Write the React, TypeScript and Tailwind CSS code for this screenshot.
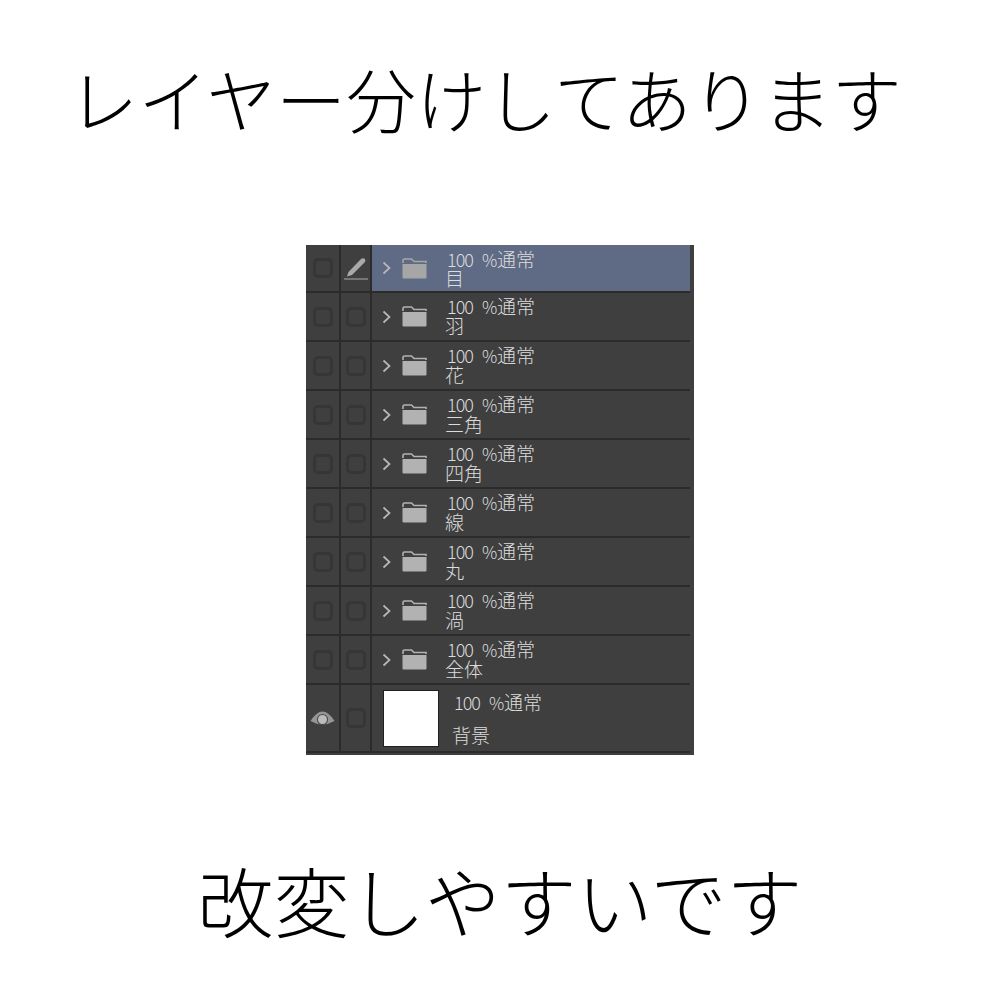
const rows = ['目', '羽', '花', '三角', '四角', '線', '丸', '渦', '全体'];

const cjk = { fontFamily: '"Noto Sans CJK JP", sans-serif' };

function Check() {
  return <div className="w-[20px] h-[20px] rounded-[5px] border-[3px] border-[#363636]" />;
}

function Pen() {
  return (
    <svg width="26" height="24" viewBox="0 0 26 24" fill="none">
      <path d="M4 20.5 L5.5 16 L18 3 Q20 1.5 22 3 Q23 5 21.5 6.5 L9 19 Z" fill="#a9a9a9" />
      <path d="M1 23 H25" stroke="#8f8f8f" strokeWidth="1.4" />
    </svg>
  );
}

function Eye() {
  return (
    <svg width="25" height="15" viewBox="0 0 25 15" fill="none">
      <path d="M0.5 10 Q12.5 -9 24.5 10 Q12.5 17 0.5 10 Z" fill="#969696" />
      <circle cx="12.5" cy="8.5" r="5.6" fill="#4a4a4a" />
      <circle cx="12.5" cy="8.5" r="4.5" fill="#bcbcbc" />
    </svg>
  );
}

function Folder({ active }: { active: boolean }) {
  const color = active ? '#a6a6a6' : '#b2b2b2';
  return (
    <svg width="25" height="21" viewBox="0 0 25 21" fill="none">
      <path d="M1 5 V2.5 Q1 1 2.5 1 H9.5 L12 3.5 H24 V5" stroke={color} strokeWidth="1.6" />
      <path d="M0.5 6 H24.5 V19.5 Q24.5 20.5 23.5 20.5 H1.5 Q0.5 20.5 0.5 19.5 Z" fill={color} />
    </svg>
  );
}

function Chevron() {
  return (
    <svg width="9" height="14" viewBox="0 0 9 14" fill="none">
      <path d="M1.5 1.5 L7.5 7 L1.5 12.5" stroke="#b8b8b8" strokeWidth="1.7" />
    </svg>
  );
}

function Opacity() {
  return (
    <div className="flex items-baseline whitespace-nowrap pl-[2px] h-[19px] leading-[19px]">
      <span className="text-[18px] tracking-[-1px] w-[35px] font-light">100</span>
      <span className="text-[17px] w-[15px] font-light">%</span>
      <span className="text-[19px] font-light">通常</span>
    </div>
  );
}

function FolderRow({ name, index }: { name: string; index: number }) {
  const active = index === 0;
  return (
    <div className={`flex ${active ? 'h-[48px]' : 'h-[49px]'} border-b-2 border-[#2b2b2b]`}>
      <div className="w-[35px] flex items-center justify-center border-r-2 border-[#2b2b2b]">
        <Check />
      </div>
      <div className="w-[31px] flex items-center justify-center border-r-2 border-[#2b2b2b]">
        {active ? <Pen /> : <Check />}
      </div>
      <div className={`flex-1 flex items-center pl-[10px] ${active ? 'bg-[#5f6a85]' : ''}`}>
        <Chevron />
        <div className="ml-[11px]">
          <Folder active={active} />
        </div>
        <div className={`ml-[18px] text-[#dcdcdc] ${active ? '' : 'mt-[-2px]'}`}>
          <Opacity />
          <div className={`text-[19px] font-light leading-[19px] whitespace-nowrap ${active ? '' : 'mt-[1px]'}`}>{name}</div>
        </div>
      </div>
    </div>
  );
}

export default function App() {
  return (
    <div className="w-[1000px] h-[1000px] bg-white flex flex-col items-center text-black" style={cjk}>
      <h1 className="mt-[50px] mr-[30px] h-[96px] text-[70px] leading-[96px] font-light whitespace-nowrap">レイヤー分けしてあります</h1>
      <div className="mt-[99px] w-[388px] h-[510px] bg-[#3f3f3f] pr-[4px]">
        {rows.map((name, i) => (
          <FolderRow key={name} name={name} index={i} />
        ))}
        <div className="flex h-[68px] border-b-2 border-[#2b2b2b]">
          <div className="w-[35px] flex items-center justify-center border-r-2 border-[#2b2b2b]">
            <Eye />
          </div>
          <div className="w-[31px] flex items-center justify-center border-r-2 border-[#2b2b2b]">
            <Check />
          </div>
          <div className="flex-1 flex items-center pl-[11px]">
            <div className="w-[56px] h-[57px] bg-white border border-[#1f1f1f]" />
            <div className="ml-[13px] text-[#dcdcdc]">
              <Opacity />
              <div className="mt-[14px] text-[19px] font-light leading-[19px] whitespace-nowrap">背景</div>
            </div>
          </div>
        </div>
      </div>
      <p className="mt-[91px] text-[76px] leading-[106px] font-light whitespace-nowrap">改変しやすいです</p>
    </div>
  );
}
